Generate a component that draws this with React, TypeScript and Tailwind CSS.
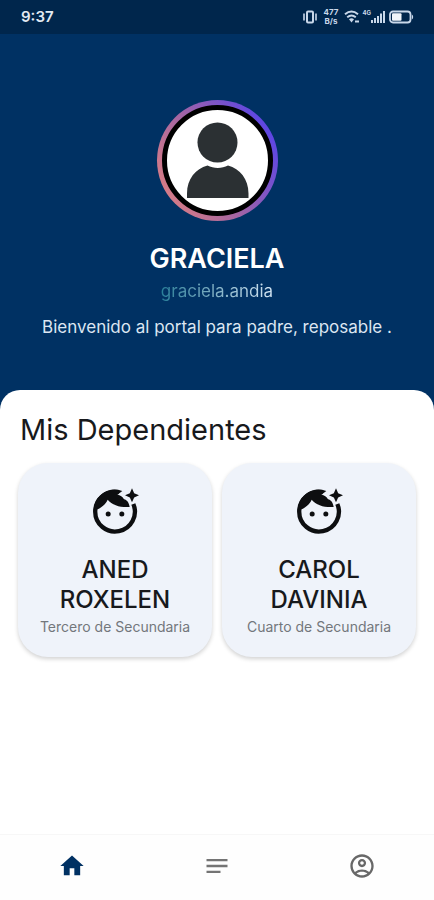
import { MdHome, MdNotes, MdOutlineAccountCircle } from 'react-icons/md'

interface Dependent {
  name: string
  grade: string
}

const dependents: Dependent[] = [
  { name: 'ANED ROXELEN', grade: 'Tercero de Secundaria' },
  { name: 'CAROL DAVINIA', grade: 'Cuarto de Secundaria' },
]

function StatusIcons() {
  return (
    <div className="flex items-center text-[#c9d8ea]">
      {/* Vibrate */}
      <svg width="16" height="14" viewBox="0 0 16 14" fill="none" stroke="currentColor" aria-hidden="true">
        <rect x="5" y="1.5" width="6" height="11" rx="1" strokeWidth="2" />
        <path d="M2 3.5v7M14 3.5v7" strokeWidth="1.6" />
      </svg>
      <div className="mx-1.5 flex flex-col items-center text-[8px] leading-[9px] font-bold">
        <span>477</span>
        <span>B/s</span>
      </div>
      {/* Wifi */}
      <svg width="16" height="14" viewBox="0 0 16 14" fill="none" stroke="currentColor" aria-hidden="true">
        <path d="M1 4.2c4-3.4 9-3.4 13 0" strokeWidth="2" />
        <path d="M3.2 7.2c2.7-2.2 5.9-2.2 8.6 0" strokeWidth="1.9" />
        <path d="M5 9.2c1.6-1.2 3.4-1.2 5 0L7.5 12.5z" fill="currentColor" stroke="none" />
        <path d="M11 11.5h4" strokeWidth="2" />
      </svg>
      <span className="mb-2 ml-0.5 text-[6px] leading-[8px] font-bold">4G</span>
      {/* Signal */}
      <svg width="14" height="14" viewBox="0 0 14 14" fill="currentColor" aria-hidden="true">
        <path d="M0 10h2v3H0zM3 8h2v5H3zM6 6h2v7H6zM9 3.5h2V13H9zM12 1h2v12h-2z" />
      </svg>
      {/* Battery */}
      <svg className="ml-1" width="25" height="14" viewBox="0 0 25 14" aria-hidden="true">
        <rect x="1" y="1.5" width="20.5" height="11" rx="3" fill="none" stroke="currentColor" strokeWidth="1.8" />
        <rect x="3" y="3.3" width="9.5" height="7.4" rx="1" fill="#f1f5fa" />
        <path d="M22.8 4.5c1.8.8 1.8 4.2 0 5z" fill="currentColor" />
      </svg>
    </div>
  )
}

function Avatar() {
  return (
    <div className="size-[121px] rounded-full bg-linear-[60deg,#dc7f83_8%,#a264a4_45%,#5b45e6_88%] p-[5px]">
      <div className="size-full overflow-hidden rounded-full border-[5px] border-black bg-white">
        <svg className="size-full" viewBox="0 0 101 101" role="img" aria-label="Foto de perfil">
          <circle cx="50.5" cy="32.5" r="20" fill="#2b3033" />
          <path
            d="M20 88V83.5C20 69 28.5 58.5 40.5 55.4C46.5 58.7 55 58.7 61 55.4C73 58.7 81.5 69 81.5 83.5V88Z"
            fill="#2b3033"
          />
        </svg>
      </div>
    </div>
  )
}

function FaceIcon() {
  return (
    <svg className="size-12 text-[#0d0e10]" viewBox="20 20 144 144" fill="currentColor" aria-hidden="true">
      <path d="M147 71A59.5 59.5 0 1 1 104 35.7" fill="none" stroke="currentColor" strokeWidth="13" />
      {/* Hair */}
      <path d="M28 91C29 57 54 28 92 28C100 28 107 29 114 32L99 43C108 44 115 49 119 57C129 59 134 68 136 80C109 82 84 75 70 58C63 73 48 86 28 91Z" />
      <circle cx="71.5" cy="101" r="7.5" />
      <circle cx="112.5" cy="101" r="7.5" />
      {/* Sparkle */}
      <path d="M143 24L149.5 38.5L164 45L149.5 51.5L143 66L136.5 51.5L122 45L136.5 38.5Z" />
    </svg>
  )
}

function DependentCard({ name, grade }: Dependent) {
  return (
    <button
      type="button"
      className="flex flex-col items-center rounded-[30px] bg-[#eff3fa] px-3 pt-6 pb-[18px] text-center shadow-[0_2px_4px_rgba(0,0,0,0.18)]"
    >
      <FaceIcon />
      <span className="mt-5 max-w-32 text-2xl leading-[30px] font-medium text-[#17191c]">{name}</span>
      <span className="text-sm leading-6 whitespace-nowrap text-[#73777c]">{grade}</span>
    </button>
  )
}

export default function App() {
  return (
    <div className="flex min-h-screen flex-col bg-white font-['Inter',sans-serif]">
      <header className="bg-[#003163] pb-[71px] text-white">
        <div className="flex h-[34px] items-center justify-between bg-[#00264c] pr-5 pl-[21px]">
          <span className="text-[15px] font-semibold text-[#e3eaf3]">9:37</span>
          <StatusIcons />
        </div>

        <div className="flex flex-col items-center px-4 pt-[66px] text-center">
          <Avatar />
          <h1 className="mt-5 text-[27px] leading-9 font-semibold">GRACIELA</h1>
          <p className="mt-0.5 bg-linear-to-r from-[#277f99] to-[#d3e5f3] bg-clip-text text-[17px] leading-6 text-transparent">
            graciela.andia
          </p>
          <p className="mt-3 text-[17px] leading-6 text-[#dce6f2]">
            Bienvenido al portal para padre, reposable .
          </p>
        </div>
      </header>

      <main className="-mt-5 flex-1 rounded-t-[20px] bg-white px-[18px] pt-5 pb-6">
        <h2 className="px-0.5 text-[29px] leading-10 text-[#17191c]">Mis Dependientes</h2>
        <div className="mt-[13px] grid grid-cols-2 gap-2.5">
          {dependents.map((dependent) => (
            <DependentCard key={dependent.name} {...dependent} />
          ))}
        </div>
      </main>

      <nav className="grid h-[66px] grid-cols-3 border-t border-[#f7f7f7] bg-[#fefefe] pb-1">
        <button type="button" aria-label="Inicio" className="flex items-center justify-center text-[#003163]">
          <MdHome className="size-7" />
        </button>
        <button type="button" aria-label="Notas" className="flex items-center justify-center text-[#747474]">
          <MdNotes className="size-7" />
        </button>
        <button type="button" aria-label="Cuenta" className="flex items-center justify-center text-[#686868]">
          <MdOutlineAccountCircle className="size-7" />
        </button>
      </nav>
    </div>
  )
}
